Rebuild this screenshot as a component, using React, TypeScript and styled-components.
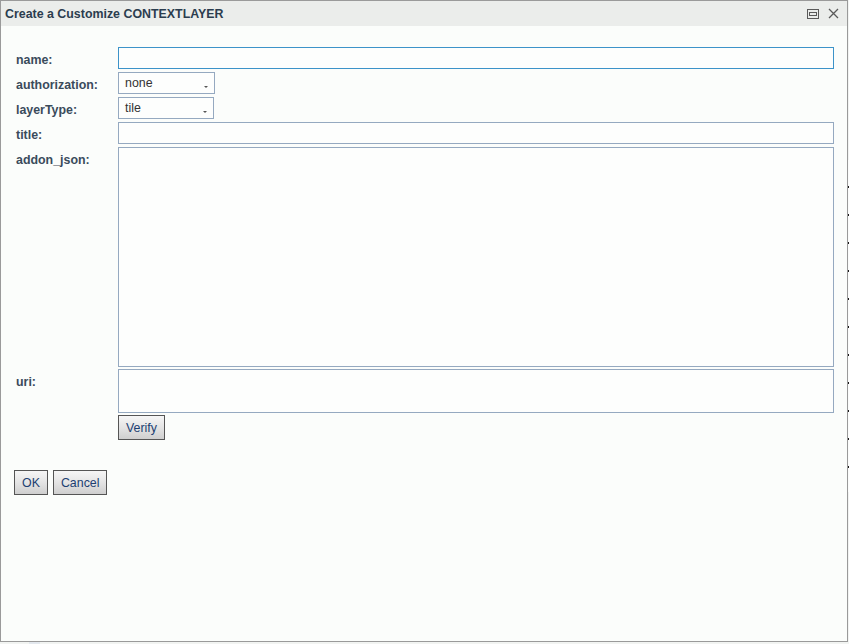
import React from 'react';
import styled, { createGlobalStyle } from 'styled-components';

const Global = createGlobalStyle`
  html, body { margin: 0; padding: 0; background: #fdfefd; }
  body { font-family: "Liberation Sans", Arial, sans-serif; }
`;

const Page = styled.div`
  width: 849px;
  height: 644px;
  display: flex;
  flex-direction: column;
  background: #f2f4f2;
  overflow: hidden;
`;

const Top = styled.div`
  display: flex;
  height: 642px;
`;

const Dialog = styled.div`
  width: 846px;
  height: 640px;
  border: 1px solid #9a9a9a;
  background: #fbfdfb;
  display: flex;
  flex-direction: column;
`;

const Edge = styled.div`
  flex: 1;
  background: repeating-linear-gradient(
    to bottom,
    #fbfdfb 0 10px,
    #1a1a1a 10px 12px,
    #fbfdfb 12px 28px
  );
  background-position: 0 100px;
  background-size: 1px 28px;
  background-repeat: repeat-y;
  margin-top: 160px;
  margin-bottom: 150px;
`;

const Titlebar = styled.div`
  height: 25px;
  background: #ebedeb;
  display: flex;
  align-items: center;
  padding: 0 6px 0 4px;
`;

const Title = styled.div`
  flex: 1;
  font-weight: bold;
  font-size: 12.4px;
  color: #2b3d4f;
  padding-top: 1px;
`;

const Tool = styled.button`
  width: 16px;
  height: 16px;
  margin-left: 4px;
  padding: 0;
  border: 0;
  background: none;
  display: flex;
  align-items: center;
  justify-content: center;
`;

const Body = styled.div`
  padding: 21px 13px 0 15px;
  display: flex;
  flex-direction: column;
`;

const Row = styled.div<{ $gap?: number }>`
  display: flex;
  margin-bottom: ${(p) => p.$gap ?? 3}px;
`;

const Label = styled.div`
  width: 102px;
  flex-shrink: 0;
  font-weight: bold;
  font-size: 12.4px;
  color: #3a4b5b;
  line-height: 22px;
  height: 22px;
  padding-top: 2px;
  box-sizing: border-box;
`;

const TextInput = styled.div<{ $focus?: boolean; $h?: number }>`
  flex: 1;
  height: ${(p) => p.$h ?? 22}px;
  box-sizing: border-box;
  border: 1px solid ${(p) => (p.$focus ? '#3c93c9' : '#95a9c0')};
  background: #fdfefd;
`;

const Select = styled.div<{ $w: number }>`
  width: ${(p) => p.$w}px;
  height: 22px;
  box-sizing: border-box;
  border: 1px solid #95a9c0;
  background: #fdfefd;
  display: flex;
  align-items: center;
  padding: 0 6px;
  font-size: 12.4px;
  color: #333;
`;

const SelectText = styled.span`
  flex: 1;
`;

const Caret = styled.span`
  width: 0;
  height: 0;
  border-left: 2px solid transparent;
  border-right: 2px solid transparent;
  border-top: 2px solid #555;
  margin-top: 8px;
`;

const Button = styled.button`
  height: 25px;
  padding: 0 7px;
  border: 1px solid #555;
  background: linear-gradient(to bottom, #f6f6f6 0%, #e4e4e4 50%, #cfcfcf 100%);
  font-family: "Liberation Sans", Arial, sans-serif;
  font-size: 12.4px;
  color: #1d3f72;
  box-sizing: border-box;
`;

const Actions = styled.div`
  display: flex;
  gap: 5px;
  margin: 30px 0 0 -2px;
`;

const Foot = styled.div`
  flex: 1;
  display: flex;
  padding-left: 29px;
`;

const Chip = styled.div`
  width: 11px;
  background: #e3e8ee;
`;

function RestoreIcon() {
  return (
    <svg width="12" height="10" viewBox="0 0 12 10">
      <rect x="0.5" y="0.5" width="11" height="9" fill="none" stroke="#5a5a5a" />
      <rect x="2.5" y="3.5" width="7" height="3" fill="none" stroke="#5a5a5a" />
    </svg>
  );
}

function CloseIcon() {
  return (
    <svg width="11" height="11" viewBox="0 0 11 11">
      <path d="M1 1 L10 10 M10 1 L1 10" stroke="#5a5a5a" strokeWidth="1.3" />
    </svg>
  );
}

export default function App() {
  return (
    <>
      <Global />
      <Page>
        <Top>
          <Dialog>
            <Titlebar>
              <Title>Create a Customize CONTEXTLAYER</Title>
              <Tool aria-label="restore"><RestoreIcon /></Tool>
              <Tool aria-label="close"><CloseIcon /></Tool>
            </Titlebar>
            <Body>
              <Row>
                <Label>name:</Label>
                <TextInput $focus />
              </Row>
              <Row>
                <Label>authorization:</Label>
                <Select $w={97}>
                  <SelectText>none</SelectText>
                  <Caret />
                </Select>
              </Row>
              <Row>
                <Label>layerType:</Label>
                <Select $w={96}>
                  <SelectText>tile</SelectText>
                  <Caret />
                </Select>
              </Row>
              <Row>
                <Label>title:</Label>
                <TextInput />
              </Row>
              <Row $gap={2}>
                <Label>addon_json:</Label>
                <TextInput $h={220} />
              </Row>
              <Row $gap={2}>
                <Label>uri:</Label>
                <TextInput $h={44} />
              </Row>
              <Row $gap={0}>
                <Label />
                <Button>Verify</Button>
              </Row>
              <Actions>
                <Button>OK</Button>
                <Button>Cancel</Button>
              </Actions>
            </Body>
          </Dialog>
          <Edge />
        </Top>
        <Foot>
          <Chip />
        </Foot>
      </Page>
    </>
  );
}
